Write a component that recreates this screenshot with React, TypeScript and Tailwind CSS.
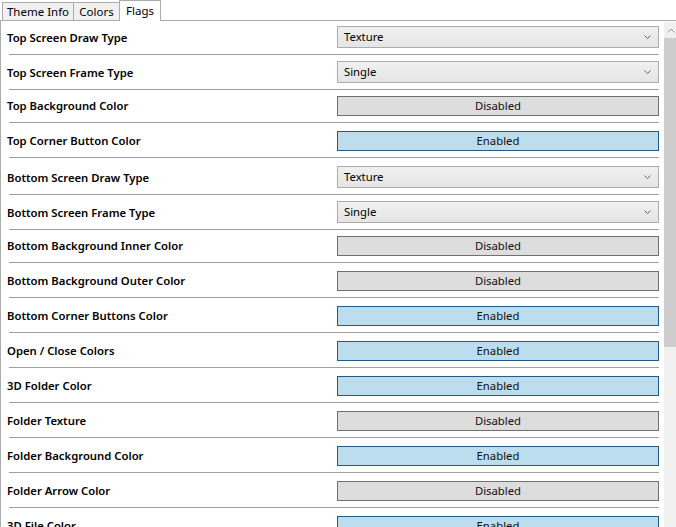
import React from "react";

type Row = { label: string; kind: "select" | "on" | "off"; value?: string; h: string };

const rows: Row[] = [
  { label: "Top Screen Draw Type", kind: "select", value: "Texture", h: "h-[33px]" },
  { label: "Top Screen Frame Type", kind: "select", value: "Single", h: "h-[34px]" },
  { label: "Top Background Color", kind: "off", h: "h-[32px]" },
  { label: "Top Corner Button Color", kind: "on", h: "h-[34px]" },
  { label: "Bottom Screen Draw Type", kind: "select", value: "Texture", h: "h-[36px]" },
  { label: "Bottom Screen Frame Type", kind: "select", value: "Single", h: "h-[34px]" },
  { label: "Bottom Background Inner Color", kind: "off", h: "h-[32px]" },
  { label: "Bottom Background Outer Color", kind: "off", h: "h-[34px]" },
  { label: "Bottom Corner Buttons Color", kind: "on", h: "h-[34px]" },
  { label: "Open / Close Colors", kind: "on", h: "h-[34px]" },
  { label: "3D Folder Color", kind: "on", h: "h-[34px]" },
  { label: "Folder Texture", kind: "off", h: "h-[34px]" },
  { label: "Folder Background Color", kind: "on", h: "h-[34px]" },
  { label: "Folder Arrow Color", kind: "off", h: "h-[34px]" },
  { label: "3D File Color", kind: "on", h: "h-[34px]" },
  { label: "File Texture", kind: "off", h: "h-[34px]" },
];

function Chevron() {
  return (
    <svg width="7" height="4" viewBox="0 0 7 4" className="block">
      <polyline points="0.5,0.5 3.5,3.5 6.5,0.5" fill="none" stroke="#606060" strokeWidth="1" />
    </svg>
  );
}

function Control({ row }: { row: Row }) {
  if (row.kind === "select") {
    return (
      <div className="w-[322px] h-[22px] border border-[#acacac] bg-gradient-to-b from-[#f0f0f0] to-[#e5e5e5] flex items-center justify-between pl-[6px] pr-[7px] text-[11.3px] text-black">
        <span>{row.value}</span>
        <Chevron />
      </div>
    );
  }
  const on = row.kind === "on";
  return (
    <div
      className={
        on
          ? "w-[322px] h-[20px] border border-[#245a83] bg-[#bcddee] flex items-center justify-center text-[11.3px] text-[#101010]"
          : "w-[322px] h-[20px] border border-[#707070] bg-[#dddddd] flex items-center justify-center text-[11.3px] text-[#101010]"
      }
    >
      {on ? "Enabled" : "Disabled"}
    </div>
  );
}

export default function App() {
  return (
    <div className="w-[676px] h-[527px] overflow-hidden bg-white font-['Noto_Sans','Liberation_Sans',sans-serif] text-black">
      <div className="flex items-end h-[20px] pl-[2px]">
        <div className="w-[72px] h-[18px] border border-b-0 border-[#acacac] bg-[#f0f0f0] flex items-center justify-center text-[11.5px]">
          Theme Info
        </div>
        <div className="-ml-px w-[47px] h-[18px] border border-b-0 border-[#acacac] bg-[#f0f0f0] flex items-center justify-center text-[11.5px]">
          Colors
        </div>
        <div className="-ml-px relative z-10 -mb-px w-[42px] h-[21px] border border-b-0 border-[#acacac] bg-white flex items-start justify-center pt-[1px] text-[11.5px]">
          Flags
        </div>
      </div>
      <div className="flex border-t border-l border-[#acacac] h-[507px]">
        <div className="w-[663px] flex flex-col overflow-hidden">
          {rows.map((r, i) => (
            <div key={i} className="shrink-0">
              <div className={`${r.h} flex items-end pb-[6px] pl-[6px]`}>
                <div className="w-[330px] h-[20px] flex items-center text-[11.3px] font-semibold whitespace-nowrap">
                  {r.label}
                </div>
                <Control row={r} />
              </div>
              <div className="ml-[8px] w-[650px] h-px bg-[#a0a0a0]" />
            </div>
          ))}
        </div>
        <div className="flex-1 pt-px">
          <div className="h-full bg-[#f0f0f0] flex flex-col">
            <div className="h-[16px] flex items-center justify-center pl-[2px]">
              <svg width="8" height="5" viewBox="0 0 8 5" className="block">
                <polyline points="0.5,4.5 4,1 7.5,4.5" fill="none" stroke="#a0a0a0" strokeWidth="1" />
              </svg>
            </div>
            <div className="h-[309px] bg-[#cdcdcd]" />
          </div>
        </div>
      </div>
    </div>
  );
}
